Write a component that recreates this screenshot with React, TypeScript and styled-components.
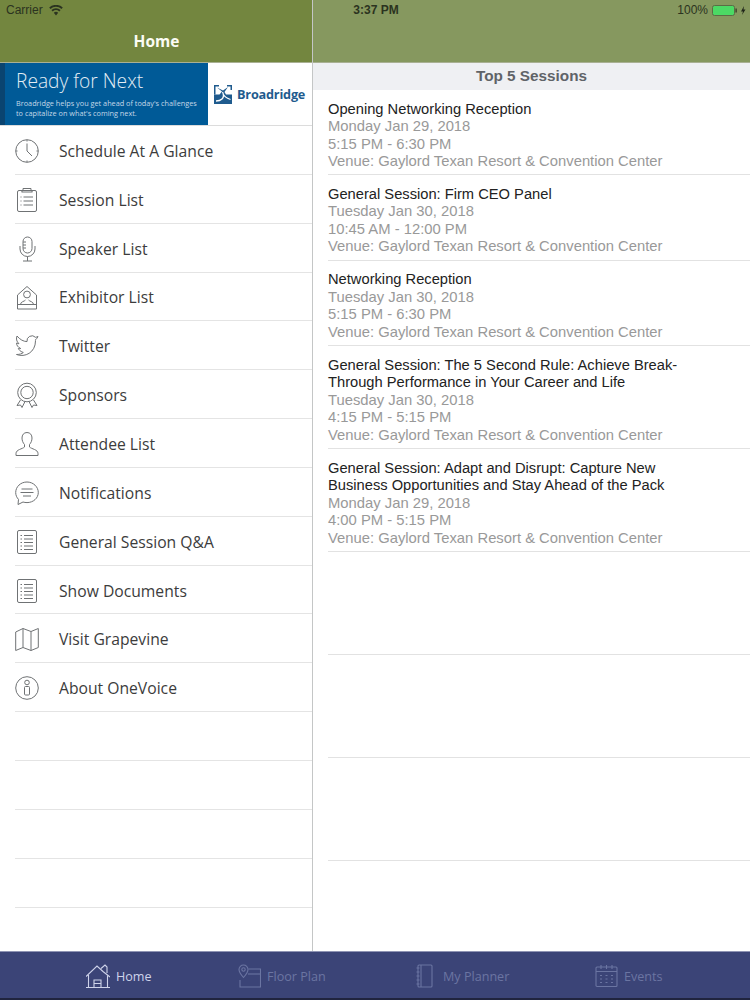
import React from 'react';
import styled, { createGlobalStyle } from 'styled-components';

const GlobalStyle = createGlobalStyle`
  html, body {
    margin: 0;
    padding: 0;
    background: #fff;
  }
  * {
    box-sizing: border-box;
  }
`;

const Page = styled.div`
  position: relative;
  width: 750px;
  height: 1000px;
  display: grid;
  grid-template-rows: 951px 49px;
  overflow: hidden;
  font-family: "Liberation Sans", Arial, sans-serif;
`;

const Panes = styled.div`
  display: grid;
  grid-template-columns: 313px 1fr;
  min-height: 0;
`;

const StatusBar = styled.div`
  position: absolute;
  top: 0;
  left: 0;
  width: 750px;
  height: 20px;
  padding: 0 4px 0 6px;
  display: grid;
  grid-template-columns: 1fr auto 1fr;
  align-items: center;
  font-size: 12px;
  color: #2b3320;
`;

const StatusLeft = styled.div`
  display: flex;
  align-items: center;
  gap: 6px;
`;

const StatusTime = styled.div`
  font-weight: 700;
  font-size: 12px;
`;

const StatusRight = styled.div`
  display: flex;
  align-items: center;
  justify-content: flex-end;
  gap: 2px;
`;

const Master = styled.div`
  border-right: 1px solid #c4c6c6;
  display: flex;
  flex-direction: column;
  min-height: 0;
`;

const Detail = styled.div`
  display: flex;
  flex-direction: column;
  min-height: 0;
`;

const NavBar = styled.div<{ $tone: string }>`
  height: 63px;
  flex: none;
  padding: 20px 0 0 1px;
  background: ${(p) => p.$tone};
  border-bottom: 1px solid #a9b093;
  display: flex;
  align-items: center;
  justify-content: center;
`;

const NavTitle = styled.div`
  color: #fbfcf4;
  font-family: "Open Sans", sans-serif;
  font-weight: 700;
  font-size: 15.5px;
`;

const Banner = styled.div`
  height: 62px;
  flex: none;
  display: flex;
  background: #fff;
`;

const BannerBlue = styled.div`
  width: 208px;
  padding: 4px 0 0 11px;
  background: #005a97;
  border-left: 5px solid #0a4470;
  color: #e3edf5;
`;

const BannerHead = styled.div`
  font-family: "Open Sans", sans-serif;
  font-weight: 300;
  font-size: 19.2px;
  line-height: 27px;
`;

const BannerCopy = styled.div`
  margin-top: 4px;
  font-family: "Open Sans", sans-serif;
  font-size: 7.3px;
  line-height: 10px;
  white-space: nowrap;
  color: #c4d8e8;
`;

const BannerLogo = styled.div`
  flex: 1;
  display: flex;
  align-items: center;
  padding: 0 0 0 6px;
  gap: 5px;
`;

const BrandName = styled.div`
  font-family: "Open Sans", sans-serif;
  font-weight: 700;
  font-size: 12.7px;
  letter-spacing: -0.2px;
  color: #1f5b8e;
`;

const MenuList = styled.div`
  flex: 1;
  display: flex;
  flex-direction: column;
  border-top: 1px solid #dcdcdc;
`;

const MenuRow = styled.div`
  height: 48.85px;
  flex: none;
  margin-left: 15px;
  padding-top: 2px;
  display: flex;
  align-items: center;
  gap: 20px;
  border-bottom: 1px solid #e4e4e4;
  font-family: "Open Sans", sans-serif;
  font-size: 15.7px;
  color: #3c3c3c;
`;

const MenuIcon = styled.svg`
  width: 24px;
  height: 26px;
  flex: none;
  fill: none;
  stroke: #6f7274;
  stroke-width: 1;
`;

const SectionHead = styled.div`
  height: 27px;
  flex: none;
  padding-bottom: 1px;
  display: flex;
  align-items: center;
  justify-content: center;
  background: #eff0f3;
  font-weight: 700;
  font-size: 15.3px;
  color: #5f6368;
`;

const SessionRow = styled.div<{ $height: number }>`
  height: ${(p) => p.$height}px;
  flex: none;
  margin-left: 15px;
  padding: 10.7px 40px 0 0;
  border-bottom: 1px solid #e2e2e2;
  line-height: 17.5px;
`;

const SessionTitle = styled.div`
  font-size: 14.7px;
  color: #222;
`;

const SessionMeta = styled.div`
  font-size: 14.8px;
  color: #999;
`;

const TabBar = styled.div`
  display: grid;
  grid-template-columns: 152px 178px 179px 1fr;
  align-items: center;
  padding: 2px 0 0 86px;
  background: #3b4477;
  border-top: 1px solid #8f94b4;
  border-bottom: 2px solid #20243f;
`;

const Tab = styled.div<{ $active?: boolean }>`
  display: flex;
  align-items: center;
  gap: 6px;
  font-family: "Open Sans", sans-serif;
  font-size: 12.6px;
  color: ${(p) => (p.$active ? '#ced3ea' : '#6b75a2')};
`;

const TabIcon = styled.svg`
  height: 24px;
  flex: none;
  fill: none;
  stroke: currentColor;
  stroke-width: 1.1;
`;

const icons: Record<string, React.ReactNode> = {
  clock: (
    <>
      <circle cx="12" cy="13" r="11.3" />
      <path d="M12 5.5V13l5 5M12 2v1.5M12 22.5V24M1 13h1.5M21.5 13H23" />
    </>
  ),
  clipboard: (
    <>
      <rect x="2.5" y="3.5" width="19" height="21" rx="1.5" />
      <path d="M8 3.5V1.5h8v2l1.5 1.5h-11zM8.5 10H18M8.5 14H18M8.5 18H18M5.5 10h1M5.5 14h1M5.5 18h1" />
    </>
  ),
  mic: (
    <>
      <rect x="8" y="1" width="9" height="16" rx="4.5" />
      <path d="M5 10v3a7.5 7.5 0 0 0 15 0v-3M12.5 20.5V25M8 25h9M8 6h3M8 9h3M8 12h3" />
    </>
  ),
  exhibitor: (
    <>
      <path d="M2.5 11L12 2.5l9.500 8.500v14h-19zM2.500 20.500h19" />
      <circle cx="12" cy="10.500" r="3.400" />
      <path d="M5.500 20.500c0-3 4-3 5-4.500M18.500 20.500c0-3-4-3-5-4.500" />
    </>
  ),
  twitter: (
    <path d="M23 3.500a10.900 10.900 0 0 1-2.600 3.400 5 5 0 0 0 .1.900C20.500 19.500 10 24.800 1.500 21.500c3 0 5.200-.6 6.800-2-3.500-1.200-4.500-3-5-4 1 .2 1.600.2 2.400 0-2.800-1.200-4.200-3.400-4.200-5.400.8.4 1.600.6 2.400.6C1.400 8.500 1 5.500 2 3c3 3.600 6.400 5.500 10 5.600a5 5 0 0 1 8.500-4.300c1-.2 1.800-.5 2.500-.8z" />
  ),
  award: (
    <>
      <circle cx="12" cy="10.500" r="9.300" />
      <circle cx="12" cy="10.500" r="6.200" />
      <path d="M5.500 18l-3.500 5.500 3.500-.5 1.500 2.500 3-6M18.500 18l3.500 5.500-3.500-.5-1.500 2.500-3-6" />
    </>
  ),
  person: (
    <path d="M12 1.500c-3.300 0-5 2.500-5 5.500 0 2.500 1 5 2.500 6.500v2.500c-2 2-8.500 2.500-8.500 6.500v2h22v-2c0-4-6.500-4.500-8.500-6.500v-2.500c1.500-1.500 2.500-4 2.500-6.500 0-3-1.700-5.500-5-5.500z" />
  ),
  bubble: (
    <>
      <path d="M12 2C5.700 2 .7 6.700.7 12.500c0 2.700 1 5 2.800 6.900L3 24.500l5-2.500c1.200.4 2.600.6 4 .6 6.300 0 11.300-4.500 11.300-10.100S18.300 2 12 2z" />
      <path d="M6.500 9h11M5.500 12.500h13M8 16h8" />
    </>
  ),
  list: (
    <>
      <rect x="2.500" y="1.500" width="19" height="23" rx="1.500" />
      <path d="M9 6.500h9M9 10h9M9 13.500h9M9 17h9M9 20.500h9M5.500 6.500h1.500M5.500 10h1.500M5.500 13.500h1.500M5.500 17h1.500M5.500 20.500h1.500" />
    </>
  ),
  map: (
    <path d="M.7 6L8 2.500 16 5.500 23.300 2.500v19L16 24.500 8 21.500.7 24.500zM8 2.500v19M16 5.500v19" />
  ),
  info: (
    <>
      <circle cx="12" cy="13" r="11.300" />
      <circle cx="12" cy="7.500" r="2.300" />
      <rect x="9.500" y="11.500" width="5" height="8.500" rx="1" />
    </>
  ),
};

const menuItems = [
  { icon: 'clock', label: 'Schedule At A Glance' },
  { icon: 'clipboard', label: 'Session List' },
  { icon: 'mic', label: 'Speaker List' },
  { icon: 'exhibitor', label: 'Exhibitor List' },
  { icon: 'twitter', label: 'Twitter' },
  { icon: 'award', label: 'Sponsors' },
  { icon: 'person', label: 'Attendee List' },
  { icon: 'bubble', label: 'Notifications' },
  { icon: 'list', label: 'General Session Q&A' },
  { icon: 'list', label: 'Show Documents' },
  { icon: 'map', label: 'Visit Grapevine' },
  { icon: 'info', label: 'About OneVoice' },
];

const venue = 'Venue: Gaylord Texan Resort & Convention Center';

const sessions = [
  { title: 'Opening Networking Reception', date: 'Monday Jan 29, 2018', time: '5:15 PM - 6:30 PM', height: 85.3 },
  { title: 'General Session: Firm CEO Panel', date: 'Tuesday Jan 30, 2018', time: '10:45 AM - 12:00 PM', height: 85.3 },
  { title: 'Networking Reception', date: 'Tuesday Jan 30, 2018', time: '5:15 PM - 6:30 PM', height: 85.3 },
  {
    title: 'General Session: The 5 Second Rule: Achieve Break-Through Performance in Your Career and Life',
    date: 'Tuesday Jan 30, 2018',
    time: '4:15 PM - 5:15 PM',
    height: 103,
  },
  {
    title: 'General Session: Adapt and Disrupt: Capture New Business Opportunities and Stay Ahead of the Pack',
    date: 'Monday Jan 29, 2018',
    time: '4:00 PM - 5:15 PM',
    height: 103,
  },
];

function WifiIcon() {
  return (
    <svg width="14" height="11" viewBox="0 0 14 11">
      <path d="M7 10.500L4.800 7.800a3.400 3.400 0 0 1 4.400 0zM3.700 6.500L2.400 5a7 7 0 0 1 9.200 0l-1.300 1.500a5 5 0 0 0-6.600 0zM1.500 3.900L.2 2.400a10.400 10.400 0 0 1 13.600 0l-1.300 1.500a8.400 8.400 0 0 0-11 0z" fill="#2b3320" />
    </svg>
  );
}

function BatteryIcon() {
  return (
    <svg width="36" height="11" viewBox="-2 0 36 11">
      <rect x=".5" y=".5" width="22" height="10" rx="2" fill="#4cd964" stroke="#5c6b45" />
      <rect x="23.500" y="3.500" width="1.200" height="4" fill="#2b3320" />
      <path d="M32 1l-3 5.500h2L30 10l3.500-5.500h-2z" fill="#20261a" />
    </svg>
  );
}

function BroadridgeLogo() {
  return (
    <svg width="18" height="19" viewBox="0 0 18 19">
      <path d="M0 9.500V0h5v1.500H1.500V9.500zM18 0v5h-1.500V1.500H13V0z" fill="#1f5b8e" />
      <path d="M0 9.500h5.500L8 6.500 3 2.500l6 3 5-3.500-3.500 5 1.500 2.500h6V19H0z" fill="#1f5b8e" />
      <path d="M8.500 7c1.500 3 1.500 5-.5 7-1.500 1.500-4 2-6 2M9 9c1.500 2.500 4 4.500 7.500 5.500" stroke="#fff" strokeWidth="1.300" fill="none" />
    </svg>
  );
}

export default function App() {
  return (
    <Page>
      <GlobalStyle />
      <Panes>
        <Master>
          <NavBar $tone="#73863f">
            <NavTitle>Home</NavTitle>
          </NavBar>
          <Banner>
            <BannerBlue>
              <BannerHead>Ready for Next</BannerHead>
              <BannerCopy>
                Broadridge helps you get ahead of today's challenges
                <br />
                to capitalize on what's coming next.
              </BannerCopy>
            </BannerBlue>
            <BannerLogo>
              <BroadridgeLogo />
              <BrandName>Broadridge</BrandName>
            </BannerLogo>
          </Banner>
          <MenuList>
            {menuItems.map((item) => (
              <MenuRow key={item.label}>
                <MenuIcon viewBox="0 0 24 26">{icons[item.icon]}</MenuIcon>
                {item.label}
              </MenuRow>
            ))}
            <MenuRow />
            <MenuRow />
            <MenuRow />
            <MenuRow />
          </MenuList>
        </Master>
        <Detail>
          <NavBar $tone="#86985f" />
          <SectionHead>Top 5 Sessions</SectionHead>
          {sessions.map((s) => (
            <SessionRow key={s.title} $height={s.height}>
              <SessionTitle>{s.title}</SessionTitle>
              <SessionMeta>{s.date}</SessionMeta>
              <SessionMeta>{s.time}</SessionMeta>
              <SessionMeta>{venue}</SessionMeta>
            </SessionRow>
          ))}
          <SessionRow $height={103} />
          <SessionRow $height={103} />
          <SessionRow $height={103} />
        </Detail>
      </Panes>
      <StatusBar>
        <StatusLeft>
          Carrier
          <WifiIcon />
        </StatusLeft>
        <StatusTime>3:37 PM</StatusTime>
        <StatusRight>
          100%
          <BatteryIcon />
        </StatusRight>
      </StatusBar>
      <TabBar>
        <Tab $active>
          <TabIcon width="24" viewBox="0 0 24 24">
            <path d="M0 23.500h24M2.500 23.500V11M21.500 23.500V11M0 12.500L11 2l6 5.500M17 7.500L24 13M15 4.500L19 1l2 2v6M8 23.500V16h7v7.500M8 19.500h7" />
          </TabIcon>
          Home
        </Tab>
        <Tab>
          <TabIcon width="23" viewBox="0 0 23 24">
            <path d="M10.500 5H22.500v18H2V16" />
            <path d="M5.500 1a4.500 4.500 0 0 0-4.500 4.500c0 3 4.500 8 4.500 8s4.500-5 4.500-8A4.500 4.500 0 0 0 5.500 1z" />
            <circle cx="5.500" cy="5.500" r="1.700" />
            <path d="M10 10h12.500" />
          </TabIcon>
          Floor Plan
        </Tab>
        <Tab>
          <TabIcon width="21" viewBox="0 0 21 24">
            <rect x="2" y="1" width="14" height="22" rx="1" />
            <path d="M5 1v22M.5 4h3M.5 8h3M.5 12h3M.5 16h3M.5 20h3" />
          </TabIcon>
          My Planner
        </Tab>
        <Tab>
          <TabIcon width="23" viewBox="0 0 23 24">
            <rect x="1" y="3" width="21" height="19.500" rx="1" />
            <path d="M1 7.500h21M6 1v4M11.500 1v4M17 1v4M5 11.500h2M10.500 11.500h2M16 11.500h2M5 15h2M10.500 15h2M16 15h2M5 18.500h2M10.500 18.500h2M16 18.500h2" />
          </TabIcon>
          Events
        </Tab>
      </TabBar>
    </Page>
  );
}
